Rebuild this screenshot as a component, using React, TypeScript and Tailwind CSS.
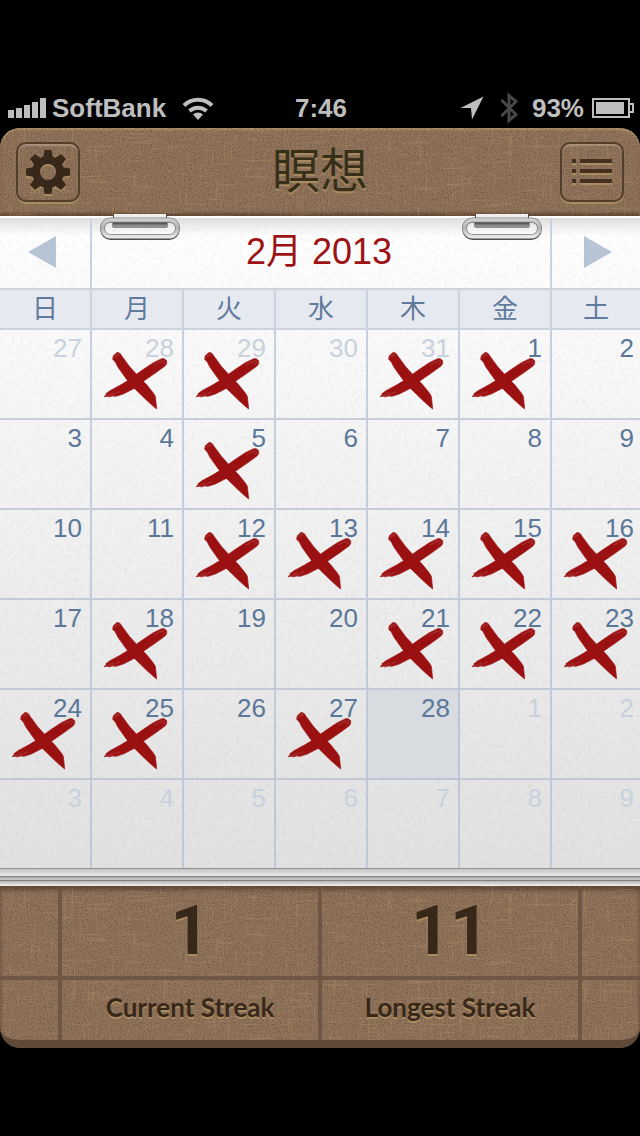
import clsx from 'clsx';

type Day = { day: number; other?: boolean; done?: boolean; today?: boolean };

const WEEKDAYS = ['日', '月', '火', '水', '木', '金', '土'];

const WEEKS: Day[][] = [
  [
    { day: 27, other: true },
    { day: 28, other: true, done: true },
    { day: 29, other: true, done: true },
    { day: 30, other: true },
    { day: 31, other: true, done: true },
    { day: 1, done: true },
    { day: 2 },
  ],
  [{ day: 3 }, { day: 4 }, { day: 5, done: true }, { day: 6 }, { day: 7 }, { day: 8 }, { day: 9 }],
  [
    { day: 10 },
    { day: 11 },
    { day: 12, done: true },
    { day: 13, done: true },
    { day: 14, done: true },
    { day: 15, done: true },
    { day: 16, done: true },
  ],
  [
    { day: 17 },
    { day: 18, done: true },
    { day: 19 },
    { day: 20 },
    { day: 21, done: true },
    { day: 22, done: true },
    { day: 23, done: true },
  ],
  [
    { day: 24, done: true },
    { day: 25, done: true },
    { day: 26 },
    { day: 27, done: true },
    { day: 28, today: true },
    { day: 1, other: true },
    { day: 2, other: true },
  ],
  [3, 4, 5, 6, 7, 8, 9].map((day) => ({ day, other: true })),
];

const STREAKS = [
  { label: 'Current Streak', value: 1 },
  { label: 'Longest Streak', value: 11 },
];

// Woven linen: fine grain plus a few stray horizontal and vertical threads
const Linen = ({ id }: { id: string }) => (
  <svg aria-hidden="true" className="pointer-events-none absolute inset-0 h-full w-full">
    <filter id={`${id}-grain`} x="0" y="0" width="100%" height="100%" colorInterpolationFilters="sRGB">
      <feTurbulence type="fractalNoise" baseFrequency="0.7" numOctaves="2" seed="4" />
      <feColorMatrix values="0 0 0 0 0.25  0 0 0 0 0.17  0 0 0 0 0.11  0.9 0 0 0 -0.36" />
    </filter>
    <filter id={`${id}-h`} x="0" y="0" width="100%" height="100%" colorInterpolationFilters="sRGB">
      <feTurbulence type="fractalNoise" baseFrequency="0.025 0.5" numOctaves="2" seed="9" />
      <feColorMatrix values="0 0 0 0 0.75  0 0 0 0 0.6  0 0 0 0 0.44  3 0 0 0 -1.82" />
    </filter>
    <filter id={`${id}-v`} x="0" y="0" width="100%" height="100%" colorInterpolationFilters="sRGB">
      <feTurbulence type="fractalNoise" baseFrequency="0.5 0.025" numOctaves="2" seed="21" />
      <feColorMatrix values="0 0 0 0 0.75  0 0 0 0 0.6  0 0 0 0 0.44  3 0 0 0 -1.82" />
    </filter>
    <rect width="100%" height="100%" filter={`url(#${id}-grain)`} />
    <rect width="100%" height="100%" filter={`url(#${id}-h)`} opacity="0.5" />
    <rect width="100%" height="100%" filter={`url(#${id}-v)`} opacity="0.5" />
  </svg>
);

const PaperGrain = () => (
  <svg aria-hidden="true" className="pointer-events-none absolute inset-0 h-full w-full">
    <filter id="paper" x="0" y="0" width="100%" height="100%" colorInterpolationFilters="sRGB">
      <feTurbulence type="fractalNoise" baseFrequency="0.25" numOctaves="2" seed="3" />
      <feColorMatrix values="0 0 0 0 0.4  0 0 0 0 0.4  0 0 0 0 0.4  0.12 0 0 0 -0.052" />
    </filter>
    <rect width="100%" height="100%" filter="url(#paper)" />
  </svg>
);

const Cross = () => (
  <svg viewBox="0 0 216 210" className="pointer-events-none absolute top-[15px] left-2 h-[70px] w-[72px]" aria-hidden="true">
    <g fill="#9b1112" stroke="#9b1112" strokeWidth="2" strokeLinejoin="round">
      <path d="M38 43L40 32 46 27 51 22 60 25 67 35 89 65 111 89 140 119 160 144 166 154 168 172 170 192 158 182 140 166 103 130 79 102 54 67 46 51z" />
      <path d="M12 155L19 149 17 147 30 137 60 121 80 109 101 94 127 75 160 53 185 41 193 41 200 47 200 56 195 63 165 85 127 111 105 129 70 147 48 154 38 153 26 156 28 153z" />
    </g>
    <path
      stroke="#f3e2e1"
      strokeWidth="1.500"
      opacity="0.35"
      fill="none"
      d="M162 60l22-12M182 52l14-8M187 58l12-7M43 38l5-9M49 35l4-10M56 34l2-8M22 152l20-9M30 154l16-5M46 146l14-6"
    />
  </svg>
);

const Gear = () => (
  <svg viewBox="-24 -24 48 48" className="h-12 w-12 drop-shadow-[0_2px_0_#a98b62]" aria-hidden="true">
    <circle r="12" fill="none" stroke="#38281a" strokeWidth="8" />
    {[0, 45, 90, 135, 180, 225, 270, 315].map((angle) => (
      <path key={angle} transform={`rotate(${angle})`} fill="#38281a" d="M-5-13L-3.500-22h7L5-13z" />
    ))}
  </svg>
);

const Clip = ({ className }: { className: string }) => (
  <svg viewBox="0 0 84 30" className={clsx('absolute -top-1 h-[30px] w-[84px]', className)} aria-hidden="true">
    <defs>
      <linearGradient id="steel" x1="0" y1="0" x2="0" y2="1">
        <stop offset="0" stopColor="#d0d0d0" />
        <stop offset="0.5" stopColor="#b4b4b4" />
        <stop offset="1" stopColor="#e6e6e6" />
      </linearGradient>
    </defs>
    <path fill="#efefef" d="M16 2h52v9H16z" />
    <path fill="#4f3d2f" d="M15 2h1v4h-1zM68 2h1v4h-1z" />
    <rect x="14" y="9" width="56" height="7" rx="2" fill="#8e8e8e" />
    <rect x="4.500" y="8.500" width="75" height="17.500" rx="8" fill="none" stroke="#4e4e4e" strokeWidth="4" />
    <rect x="4.500" y="8" width="75" height="16.500" rx="8" fill="none" stroke="#808080" strokeWidth="5" />
    <rect x="4.500" y="8" width="75" height="16.500" rx="8" fill="none" stroke="url(#steel)" strokeWidth="3.500" />
    <path fill="#5a5a5a" d="M15 10.500h54v2H15z" />
  </svg>
);

const StatusBar = () => (
  <div className="grid h-10 grid-cols-[1fr_auto_1fr] items-center pr-1.5 pl-2 text-[26px] font-bold text-[#bebebe]">
    <div className="flex items-center">
      <svg viewBox="0 0 38 20" className="mr-1.5 h-5 w-[38px]" fill="currentColor" aria-hidden="true">
        <path d="M0 12h6v8H0zM8 10h6v10H8zM16 7h6v13h-6zM24 4h6v16h-6zM32 0h6v20h-6z" />
      </svg>
      <span>SoftBank</span>
      <svg viewBox="0 0 32 24" className="ml-4 h-6 w-8" fill="none" stroke="currentColor" aria-hidden="true">
        <path strokeWidth="4" d="M2 9.500a20 20 0 0 1 28 0" />
        <path strokeWidth="4" d="M7.500 15a12.500 12.500 0 0 1 17 0" />
        <path fill="currentColor" stroke="none" d="M11 18.500a7.500 7.500 0 0 1 10 0L16 24z" />
      </svg>
    </div>
    <span>7:46</span>
    <div className="flex items-center justify-end">
      <svg viewBox="0 0 24 24" className="mr-4 h-6 w-6" fill="currentColor" aria-hidden="true">
        <path d="M23.500.500L12 23.500l-1-11.500L.500 12z" />
      </svg>
      <svg viewBox="0 0 18 32" className="mr-3.5 h-8 w-[18px] text-[#484848]" fill="none" stroke="currentColor" strokeWidth="3" aria-hidden="true">
        <path d="M1.500 8l14.500 14.500L9 28.500v-25L16 9.500 1.500 24" />
      </svg>
      <span>93%</span>
      <svg viewBox="0 0 42 20" className="ml-2 h-5 w-[42px]" aria-hidden="true">
        <path fill="none" stroke="currentColor" strokeWidth="2" d="M1 1h36v18H1zM37 6h4v8h-4" />
        <path fill="currentColor" d="M4 4h28v12H4z" />
      </svg>
    </div>
  </div>
);

const toolButton =
  'relative flex h-[60px] w-16 items-center justify-center rounded-[10px] border-2 border-[#533e2c] shadow-[0_2px_0_#a98b62,inset_0_2px_1px_#a8927b]';

const Toolbar = () => (
  <header className="relative flex h-[88px] items-center justify-between overflow-hidden rounded-t-[20px] bg-[#92755c] px-4 shadow-[inset_0_2px_2px_#b4966c,inset_0_-3px_3px_#664d39]">
    <Linen id="toolbar" />
    <button type="button" aria-label="設定" className={toolButton}>
      <Gear />
    </button>
    <h1 className="relative text-[48px] leading-none font-normal text-[#363019] [text-shadow:0_2px_0_#a98b62]">瞑想</h1>
    <button type="button" aria-label="一覧" className={toolButton}>
      <svg viewBox="0 0 40 26" className="h-[26px] w-10" aria-hidden="true">
        <path fill="#a98b62" d="M0 4h4v2H0zM8 4h32v2H8zM0 14h4v2H0zM8 14h32v2H8zM0 24h4v2H0zM8 24h32v2H8z" />
        <path fill="#44301f" d="M0 0h4v4H0zM8 0h32v4H8zM0 10h4v4H0zM8 10h32v4H8zM0 20h4v4H0zM8 20h32v4H8z" />
      </svg>
    </button>
  </header>
);

const MonthNav = () => (
  <div className="grid h-18 grid-cols-[92fr_458fr_90fr] border-b-2 border-[#cbd2e0] bg-linear-to-b from-[#dedede] to-transparent to-[18px]">
    <button type="button" aria-label="前の月" className="flex items-center justify-center border-r-2 border-[#cbd2e0] pr-1.5 pb-0.5">
      <svg viewBox="0 0 28 32" className="h-8 w-7" fill="#b7c4d5" aria-hidden="true">
        <path d="M28 0v32L0 16z" />
      </svg>
    </button>
    <h2 className="flex items-center justify-center pr-1 pb-0.5 text-4xl text-[#9d1214]">2月 2013</h2>
    <button type="button" aria-label="次の月" className="flex items-center justify-center border-l-2 border-[#cbd2e0] pb-0.5 pl-1">
      <svg viewBox="0 0 28 32" className="h-8 w-7" fill="#b7c4d5" aria-hidden="true">
        <path d="M0 0v32l28-16z" />
      </svg>
    </button>
  </div>
);

const Calendar = () => (
  <main className="relative bg-linear-to-b from-white to-[#e0e0e0]">
    <PaperGrain />
    <div className="relative border-t-2 border-white">
      <MonthNav />
      <table className="w-full table-fixed border-separate border-spacing-0">
        <thead>
          <tr>
            {WEEKDAYS.map((name) => (
              <th
                key={name}
                scope="col"
                className="h-10 w-[14.375%] border-r-2 border-b-2 border-[#cbd2e0] bg-[#e6eaf0] p-0 text-[26px] leading-[38px] font-normal text-[#5f7a9c] last:w-auto last:border-r-0"
              >
                {name}
              </th>
            ))}
          </tr>
        </thead>
        <tbody>
          {WEEKS.map((week, w) => (
            <tr key={w}>
              {week.map((d, i) => (
                <td
                  key={i}
                  className={clsx(
                    'relative border-[#adb8cf]/65 p-0',
                    i < 6 && 'border-r-2',
                    w < 5 && 'border-b-2',
                    d.today && 'bg-[#d8dbe0]',
                  )}
                >
                  <button
                    type="button"
                    className={clsx(
                      'flex h-[88px] w-full justify-end pt-[3px] text-[26px] leading-[30px]',
                      i < 6 ? 'pr-2' : 'pr-1.5',
                      d.other ? 'text-[#c8d1dc]' : 'text-[#5b7799]',
                    )}
                  >
                    {d.day}
                  </button>
                  {d.done && <Cross />}
                </td>
              ))}
            </tr>
          ))}
        </tbody>
      </table>
    </div>
    <Clip className="left-[98px]" />
    <Clip className="right-24" />
    {/* stacked sheets under the current month */}
    <div className="relative">
      <div className="h-2 border-t border-[#929292] bg-linear-to-b from-[#c4c4c4] to-[#ebebeb]" />
      <div className="h-1 border-t border-[#858585] bg-linear-to-b from-[#a8a8a8] to-[#cfcfcf]" />
      <div className="h-1.5 border-t border-[#808080] bg-linear-to-b from-[#b4b4b4] to-[#f2f2f2]" />
    </div>
  </main>
);

const seam = 'border-[#665140]/80';

const Streaks = () => (
  <footer className="relative overflow-hidden rounded-b-[20px] border-b-8 border-[#5f4938] bg-[#92755c] shadow-[inset_0_4px_4px_#5f4938]">
    <Linen id="streaks" />
    <dl className="relative grid grid-flow-col grid-cols-[58fr_260fr_260fr_62fr] grid-rows-[90px_64px] text-center font-bold text-[#38281a] [text-shadow:0_2px_0_#a98b62]">
      <div className="row-span-2 grid grid-rows-subgrid">
        <div className={clsx('row-start-2 border-t-4', seam)} />
      </div>
      {STREAKS.map((s) => (
        <div key={s.label} className={clsx('row-span-2 grid grid-rows-subgrid border-l-4', seam)}>
          <dt className={clsx('row-start-2 border-t-4 font-["Lato",sans-serif] text-[26px] leading-[54px]', seam)}>{s.label}</dt>
          <dd className='row-start-1 font-["Roboto",sans-serif] text-[68px] leading-[90px]'>{s.value}</dd>
        </div>
      ))}
      <div className={clsx('row-span-2 grid grid-rows-subgrid border-l-4', seam)}>
        <div className={clsx('row-start-2 border-t-4', seam)} />
      </div>
    </dl>
  </footer>
);

export default function App() {
  return (
    <div
      lang="ja"
      className='min-h-screen bg-black py-22 font-["Liberation_Sans","Noto_Sans_CJK_JP",sans-serif]'
    >
      <StatusBar />
      <Toolbar />
      <Calendar />
      <Streaks />
    </div>
  );
}
